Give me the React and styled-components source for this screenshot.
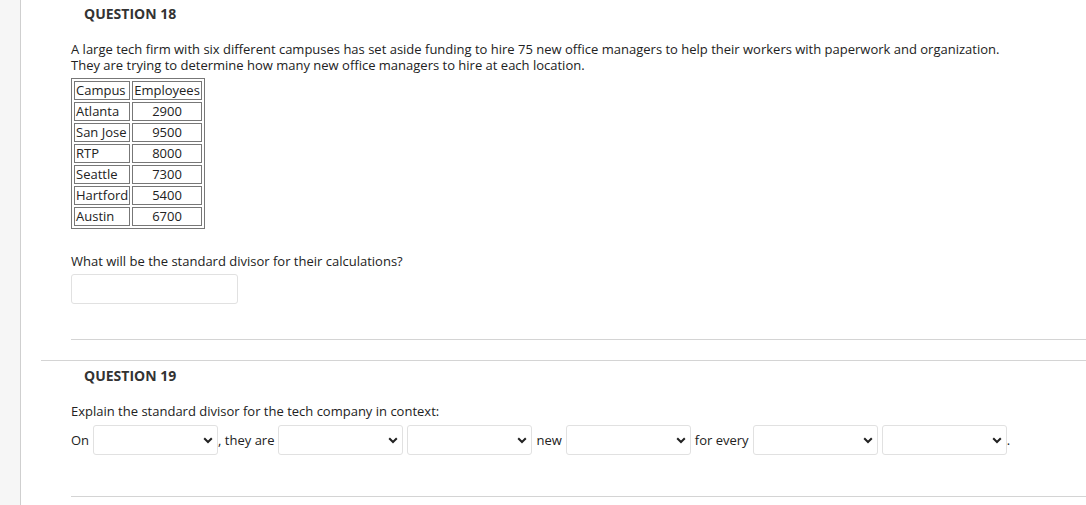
import React from 'react';
import styled, { createGlobalStyle } from 'styled-components';

const GlobalStyle = createGlobalStyle`
	html, body {
		margin: 0;
		padding: 0;
		background: #fff;
	}
	body {
		font-family: 'Open Sans', 'DejaVu Sans', sans-serif;
		color: #222;
	}
`;

const Page = styled.div`
	display: flex;
	min-height: 505px;
`;

const Sidebar = styled.div`
	width: 20px;
	flex-shrink: 0;
	background-color: #f6f6f6;
	border-right: 1px solid #cfcfcf;
`;

const Main = styled.div`
	flex: 1;
	padding-left: 20px;
`;

const Question = styled.section`
	padding-top: ${props => (props.first ? '4px' : '5px')};
	padding-bottom: 20px;
	border-top: ${props => (props.first ? 'none' : '1px solid #d4d4d4')};
`;

const Heading = styled.h3`
	margin: 0 0 0 43px;
	font-size: 14px;
	line-height: 20px;
	font-weight: 700;
	color: #333;
`;

const Body = styled.div`
	margin-left: 30px;
	padding-top: 17px;
	padding-bottom: ${props => props.bottom}px;
	border-bottom: 1px solid #d4d4d4;
	font-size: 13px;
	line-height: 16px;
`;

const Text = styled.p`
	margin: 0;
	margin-top: ${props => props.top || 0}px;
`;

const DataTable = styled.table`
	margin-top: 5px;
	border: 1px solid #777;
	border-spacing: 2px;
	font-size: 13px;
	line-height: 17px;

	td {
		border: 1px solid #777;
		padding: 0 1px;
	}
`;

const NumCell = styled.td`
	text-align: center;
`;

const AnswerInput = styled.div`
	margin-top: 5px;
	width: 165px;
	height: 28px;
	border: 1px solid #e1e1e1;
	border-radius: 3px;
	background: #fff;
`;

const FillRow = styled.div`
	margin-top: 6px;
	display: flex;
	align-items: center;
	gap: 4px;
	white-space: nowrap;
`;

const Word = styled.span`
	margin-left: ${props => (props.$attached ? '-4px' : '0')};
`;

const SelectBox = styled.div`
	width: 119px;
	height: 28px;
	border: 1px solid #e1e1e1;
	border-radius: 3px;
	background: #fff;
	display: flex;
	align-items: center;
	justify-content: flex-end;
	padding-right: 4px;
`;

const Chevron = () => (
	<svg width="10" height="7" viewBox="0 0 10 7">
		<path d="M1.2 1.2 L5 5 L8.8 1.2" fill="none" stroke="#222" strokeWidth="2" />
	</svg>
);

const Select = () => (
	<SelectBox>
		<Chevron />
	</SelectBox>
);

const campuses = [
	['Atlanta', '2900'],
	['San Jose', '9500'],
	['RTP', '8000'],
	['Seattle', '7300'],
	['Hartford', '5400'],
	['Austin', '6700'],
];

export default function App() {
	return (
		<>
			<GlobalStyle />
			<Page>
				<Sidebar />
				<Main>
					<Question first>
						<Heading>QUESTION 18</Heading>
						<Body bottom={35}>
							<Text>
								A large tech firm with six different campuses has set aside funding to hire 75 new office managers to help their workers with paperwork and organization.
								<br />
								They are trying to determine how many new office managers to hire at each location.
							</Text>
							<DataTable>
								<tbody>
									<tr>
										<td>Campus</td>
										<td>Employees</td>
									</tr>
									{campuses.map(([name, count]) => (
										<tr key={name}>
											<td>{name}</td>
											<NumCell>{count}</NumCell>
										</tr>
									))}
								</tbody>
							</DataTable>
							<Text top={24}>What will be the standard divisor for their calculations?</Text>
							<AnswerInput />
						</Body>
					</Question>
					<Question>
						<Heading>QUESTION 19</Heading>
						<Body bottom={41}>
							<Text>Explain the standard divisor for the tech company in context:</Text>
							<FillRow>
								<Word>On</Word>
								<Select />
								<Word $attached>, they are</Word>
								<Select />
								<Select />
								<Word>new</Word>
								<Select />
								<Word>for every</Word>
								<Select />
								<Select />
								<Word $attached>.</Word>
							</FillRow>
						</Body>
					</Question>
				</Main>
			</Page>
		</>
	);
}
